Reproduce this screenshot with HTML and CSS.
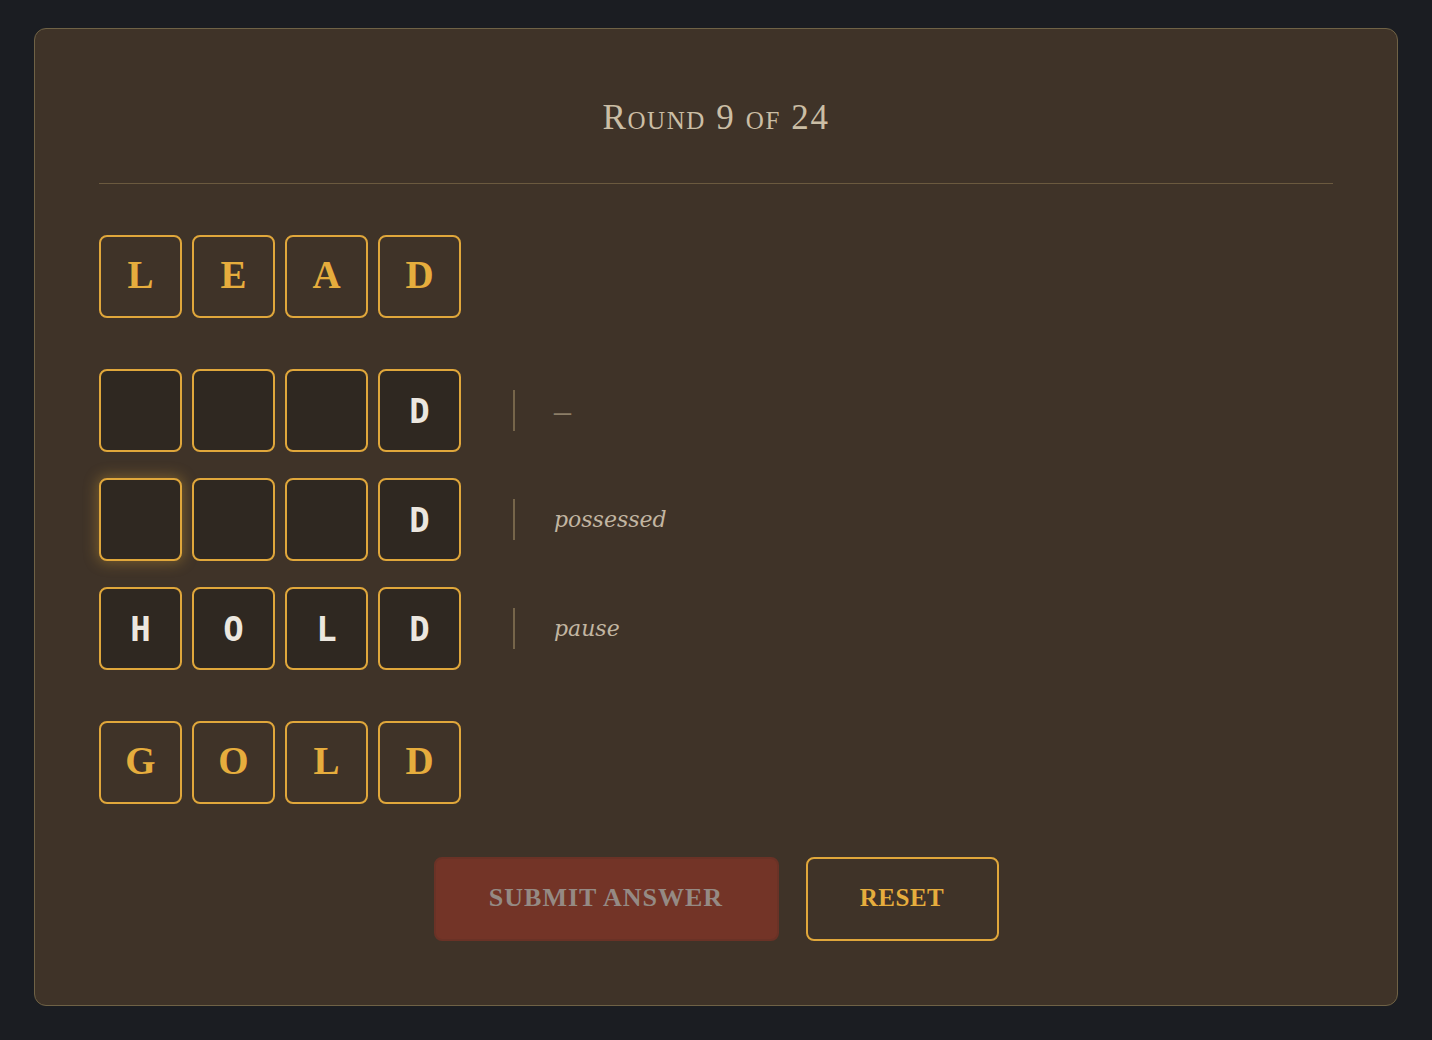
FILE: index.html
```html
<!DOCTYPE html>
<html>
<head>
<meta charset="utf-8">
<link rel="stylesheet" href="styles.css">
</head>
<body>
<div class="card">
  <h1 class="title">Round 9 of 24</h1>
  <div class="rule"></div>
  <div class="ladder">
    <div class="row end">
      <div class="tile gold">L</div><div class="tile gold">E</div><div class="tile gold">A</div><div class="tile gold">D</div>
    </div>
    <div class="row">
      <div class="tile in"></div><div class="tile in"></div><div class="tile in"></div><div class="tile in">D</div>
      <div class="clue dash">–</div>
    </div>
    <div class="row">
      <div class="tile in focus"></div><div class="tile in"></div><div class="tile in"></div><div class="tile in">D</div>
      <div class="clue">possessed</div>
    </div>
    <div class="row">
      <div class="tile in">H</div><div class="tile in">O</div><div class="tile in">L</div><div class="tile in">D</div>
      <div class="clue">pause</div>
    </div>
    <div class="row end">
      <div class="tile gold">G</div><div class="tile gold">O</div><div class="tile gold">L</div><div class="tile gold">D</div>
    </div>
  </div>
  <div class="actions">
    <button class="btn submit">SUBMIT ANSWER</button>
    <button class="btn reset">RESET</button>
  </div>
</div>
</body>
</html>
```
FILE: styles.css
```css
html, body { margin: 0; padding: 0; }
body {
  background: #1b1d22;
  width: 1432px;
  height: 1040px;
  box-sizing: border-box;
  padding: 28px 34px 0 34px;
  overflow: hidden;
}
.card {
  box-sizing: border-box;
  width: 1364px;
  background: #3f3328;
  border: 1px solid #6f6246;
  border-radius: 12px;
  padding: 64px 64px 64px 64px;
  display: flex;
  flex-direction: column;
}
.card > * { flex-shrink: 0; }
.title {
  margin: 0;
  text-align: center;
  font-family: "Liberation Serif", serif;
  font-weight: normal;
  font-variant: small-caps;
  font-size: 35px;
  letter-spacing: 1.6px;
  line-height: 50px;
  color: #cbbea5;
}
.rule {
  height: 1px;
  background: #6b5a3f;
  margin-top: 40px;
}
.ladder {
  margin-top: 51px;
  display: flex;
  flex-direction: column;
  gap: 26px;
}
.row {
  display: flex;
  align-items: center;
  gap: 10px;
}
.row:first-child { margin-bottom: 25px; }
.row:last-child { margin-top: 25px; }
.tile {
  box-sizing: border-box;
  width: 83px;
  height: 83px;
  border: 2px solid #e0a73b;
  border-radius: 8px;
  display: flex;
  align-items: center;
  justify-content: center;
}
.tile.gold {
  font-family: "Liberation Serif", serif;
  font-weight: bold;
  font-size: 39px;
  color: #e6ad3d;
  padding-bottom: 4px;
}
.tile.in {
  background: #2f2821;
  font-family: "DejaVu Sans Mono", monospace;
  font-weight: bold;
  font-size: 34px;
  color: #ece7df;
}
.tile.focus {
  box-shadow: 0 0 14px 2px rgba(224, 168, 58, 0.35);
}
.clue {
  margin-left: 42px;
  border-left: 2px solid #76654a;
  height: 41px;
  padding-left: 39px;
  display: flex;
  align-items: center;
  font-family: "DejaVu Serif", serif;
  font-style: italic;
  font-size: 22px;
  color: #c2b6a2;
}
.clue.dash {
  font-style: normal;
  color: #8c7e67;
  font-family: "Liberation Serif", serif;
  font-size: 34px;
}
.actions {
  margin-top: 53px;
  display: flex;
  justify-content: center;
  gap: 27px;
}
.btn {
  box-sizing: border-box;
  height: 84px;
  border-radius: 8px;
  font-family: "Liberation Serif", serif;
  font-weight: bold;
  font-size: 26px;
  letter-spacing: 1px;
  padding-bottom: 3px;
  cursor: pointer;
}
.submit {
  width: 345px;
  background: #733427;
  border: 2px solid #6a3226;
  color: #958a84;
}
.reset {
  width: 193px;
  background: transparent;
  border: 2px solid #e0a73b;
  color: #e6ad3d;
  font-size: 25px;
  letter-spacing: 0.5px;
}
```
